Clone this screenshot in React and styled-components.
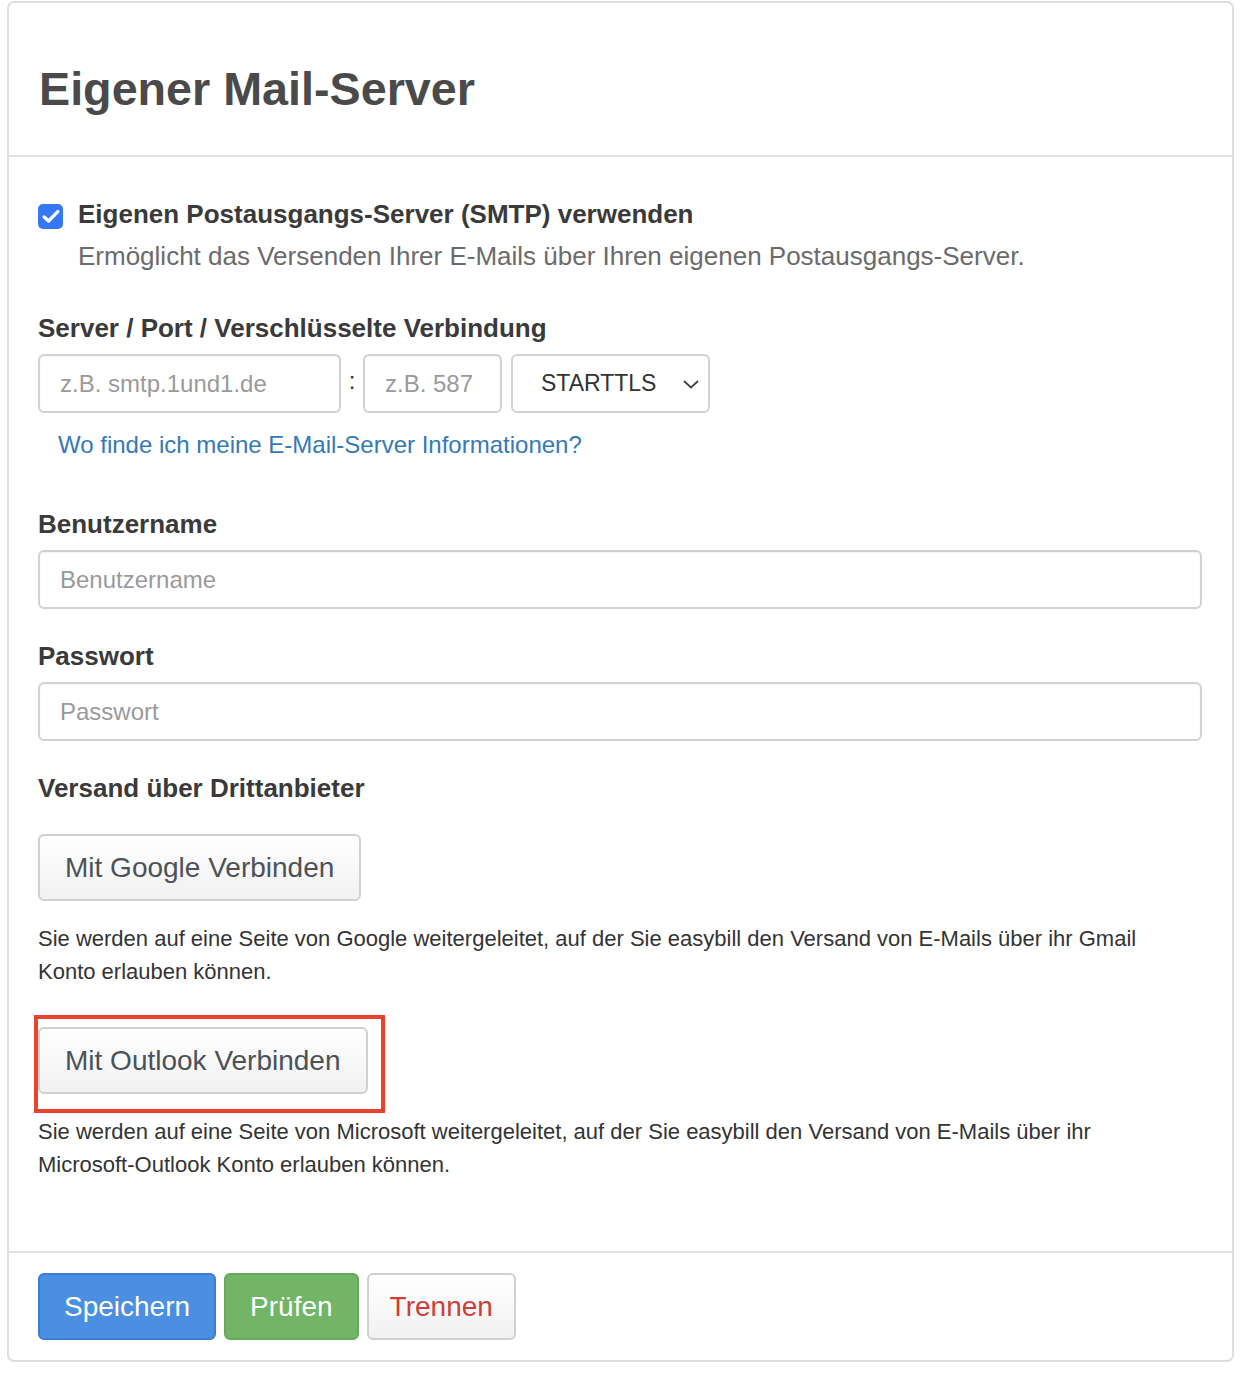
import React from "react";
import styled, { createGlobalStyle } from "styled-components";

const Global = createGlobalStyle`
  html, body { margin: 0; padding: 0; background: #fff; }
  body { font-family: "Liberation Sans", Arial, Helvetica, sans-serif; color: #333; }
  * { box-sizing: border-box; }
`;

const Card = styled.div`
  margin: 1px 18px 13px 7px;
  border: 2px solid #dedede;
  border-radius: 7px;
  background: #fff;
`;

const Header = styled.div`
  padding: 60px 30px 39px;
  border-bottom: 2px solid #e2e2e2;
`;

const Title = styled.h1`
  margin: 0;
  font-size: 46.7px;
  line-height: 53px;
  font-weight: 700;
  color: #4a4a4a;
`;

const Body = styled.div`
  padding: 40px 30px 70px 29px;
`;

const CheckRow = styled.div`
  display: flex;
  gap: 15px;
  margin-bottom: 38px;
`;

const CheckBox = styled.span`
  flex: none;
  width: 25px;
  height: 25px;
  margin-top: 7px;
  border-radius: 5px;
  background: #3478f6;
  display: flex;
  align-items: center;
  justify-content: center;
`;

const CheckText = styled.div`
  display: flex;
  flex-direction: column;
  gap: 8px;
`;

const CheckLabel = styled.div`
  font-size: 26px;
  line-height: 34px;
  font-weight: 700;
  color: #3a3a3a;
`;

const Hint = styled.div`
  font-size: 26px;
  line-height: 34px;
  color: #6b6b6b;
`;

const Group = styled.div`
  margin-bottom: ${(p) => p.$mb ?? 30}px;
`;

const Label = styled.div`
  font-size: 26px;
  line-height: 34px;
  font-weight: 700;
  color: #3a3a3a;
  margin-bottom: ${(p) => p.$mb ?? 9}px;
`;

const InputRow = styled.div`
  display: flex;
  align-items: center;
`;

const Input = styled.input`
  display: block;
  width: ${(p) => p.$w || "100%"};
  height: 59px;
  padding: 0 20px;
  border: 2px solid #d2d2d2;
  border-radius: 6px;
  box-shadow: inset 0 1px 2px rgba(0, 0, 0, 0.06);
  font-family: inherit;
  font-size: 24px;
  color: #333;
  outline: none;
  &::placeholder { color: #9a9a9a; }
`;

const Colon = styled.span`
  width: 22px;
  text-align: center;
  font-size: 24px;
  color: #333;
  margin-top: -6px;
`;

const SelectBox = styled.div`
  margin-left: 9px;
  width: 199px;
  height: 59px;
  border: 2px solid #d2d2d2;
  border-radius: 6px;
  display: flex;
  align-items: center;
  justify-content: space-between;
  padding: 0 8px 0 28px;
  font-size: 23px;
  color: #333;
`;

const Link = styled.a`
  display: block;
  margin: 15px 0 0 20px;
  font-size: 24px;
  line-height: 34px;
  color: #337ab7;
  text-decoration: none;
`;

const ThirdButton = styled.button`
  display: inline-flex;
  align-items: center;
  height: 67px;
  padding: 0 25px;
  border: 2px solid #d0d0d0;
  border-radius: 6px;
  background: linear-gradient(#ffffff, #f1f1f1);
  font-family: inherit;
  font-size: 28px;
  color: #4b5258;
  cursor: pointer;
`;

const Mark = styled.span`
  position: relative;
  display: inline-block;
`;

const RedFrame = styled.span`
  position: absolute;
  top: -12px;
  left: -4px;
  right: -17px;
  bottom: -19px;
  border: 4px solid #e8432d;
  pointer-events: none;
`;

const Note = styled.p`
  margin: 21px 0 ${(p) => p.$mb ?? 0}px;
  max-width: 1140px;
  font-size: 22px;
  line-height: 33px;
  color: #333;
`;

const Footer = styled.div`
  border-top: 2px solid #e2e2e2;
  padding: 20px 29px 20px;
  display: flex;
  gap: 8px;
`;

const variants = {
  primary: { bg: "#4a8fe1", border: "#3b7fd3", color: "#fff" },
  success: { bg: "#72b566", border: "#66aa5a", color: "#fff" },
  danger: { bg: "linear-gradient(#ffffff, #f1f1f1)", border: "#d0d0d0", color: "#cf3e36" },
};

const ActionButton = styled.button`
  height: 67px;
  padding: 0 ${(p) => p.$px}px;
  border: 2px solid ${(p) => variants[p.$v].border};
  border-radius: 6px;
  background: ${(p) => variants[p.$v].bg};
  color: ${(p) => variants[p.$v].color};
  font-family: inherit;
  font-size: 28px;
  cursor: pointer;
`;

export default function App() {
  return (
    <>
      <Global />
      <Card>
        <Header>
          <Title>Eigener Mail-Server</Title>
        </Header>
        <Body>
          <CheckRow>
            <CheckBox>
              <svg width="18" height="15" viewBox="0 0 18 15">
                <path d="M2.2 8 L6.6 12 L15.8 2.6" fill="none" stroke="#fff" strokeWidth="3.4" strokeLinecap="round" strokeLinejoin="round" />
              </svg>
            </CheckBox>
            <CheckText>
              <CheckLabel>Eigenen Postausgangs-Server (SMTP) verwenden</CheckLabel>
              <Hint>Ermöglicht das Versenden Ihrer E-Mails über Ihren eigenen Postausgangs-Server.</Hint>
            </CheckText>
          </CheckRow>

          <Group $mb={45}>
            <Label>Server / Port / Verschlüsselte Verbindung</Label>
            <InputRow>
              <Input $w="303px" placeholder="z.B. smtp.1und1.de" />
              <Colon>:</Colon>
              <Input $w="139px" placeholder="z.B. 587" />
              <SelectBox>
                <span>STARTTLS</span>
                <svg width="18" height="12" viewBox="0 0 18 12">
                  <path d="M2 3 L9 9.5 L16 3" fill="none" stroke="#444" strokeWidth="1.8" />
                </svg>
              </SelectBox>
            </InputRow>
            <Link href="#">Wo finde ich meine E-Mail-Server Informationen?</Link>
          </Group>

          <Group>
            <Label>Benutzername</Label>
            <Input placeholder="Benutzername" />
          </Group>

          <Group>
            <Label>Passwort</Label>
            <Input type="password" placeholder="Passwort" />
          </Group>

          <Label $mb={29}>Versand über Drittanbieter</Label>
          <ThirdButton>Mit Google Verbinden</ThirdButton>
          <Note $mb={39}>
            Sie werden auf eine Seite von Google weitergeleitet, auf der Sie easybill den Versand von E-Mails über ihr Gmail Konto erlauben können.
          </Note>
          <Mark>
            <ThirdButton>Mit Outlook Verbinden</ThirdButton>
            <RedFrame />
          </Mark>
          <Note>
            Sie werden auf eine Seite von Microsoft weitergeleitet, auf der Sie easybill den Versand von E-Mails über ihr Microsoft-Outlook Konto erlauben können.
          </Note>
        </Body>
        <Footer>
          <ActionButton $v="primary" $px={24}>Speichern</ActionButton>
          <ActionButton $v="success" $px={24}>Prüfen</ActionButton>
          <ActionButton $v="danger" $px={21}>Trennen</ActionButton>
        </Footer>
      </Card>
    </>
  );
}
